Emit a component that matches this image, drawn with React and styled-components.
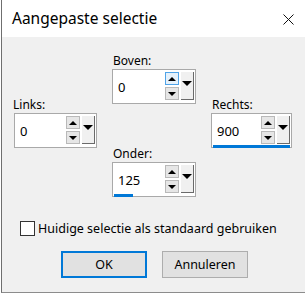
import React from "react";
import styled, { createGlobalStyle } from "styled-components";

const Global = createGlobalStyle`
  html, body { margin: 0; padding: 0; background: #ffffff; }
  body { font-family: "Noto Sans", "Open Sans", sans-serif; color: #000; }
  #root { width: 305px; height: 295px; overflow: hidden; }
`;

const Window = styled.div`
  margin-left: 1px;
  width: 304px;
  height: 293px;
  box-sizing: border-box;
  border-left: 1px solid #6f6f6f;
  border-bottom: 1px solid #8c8c8c;
  display: flex;
  flex-direction: column;
  background: #f0f0f0;
`;

const TitleBar = styled.div`
  height: 37px;
  flex: none;
  background: #ffffff;
  display: flex;
  align-items: center;
  justify-content: space-between;
  padding: 0 11px 0 10px;
`;

const Title = styled.div`
  font-size: 15.5px;
  margin-top: -1px;
`;

const CloseIcon = styled.svg`
  width: 11px;
  height: 11px;
  margin-top: 1px;
`;

const Body = styled.div`
  flex: 1;
  display: flex;
  flex-direction: column;
  padding: 16px 0 0 12px;
`;

const Fields = styled.div`
  display: flex;
  gap: 15px;
`;

const Column = styled.div`
  display: flex;
  flex-direction: column;
  gap: 42px;
  padding-top: ${(p) => p.$offset || 0}px;
`;

const Group = styled.div`
  display: flex;
  flex-direction: column;
`;

const Label = styled.div`
  font-size: 12px;
  line-height: 15px;
  height: 15px;
  margin: 0 0 1px ${(p) => p.$indent || 0}px;
`;

const Box = styled.div`
  width: ${(p) => p.$w}px;
  height: 35px;
  box-sizing: border-box;
  border: 1px solid #a9a9a9;
  background: #ffffff;
  display: flex;
  flex-direction: column;
  padding: 2px 1px 0 2px;
`;

const Row = styled.div`
  display: flex;
  height: 28px;
`;

const Value = styled.div`
  flex: 1;
  display: flex;
  align-items: center;
  padding-left: 3px;
  font-size: 13px;
  padding-top: 1px;
`;

const Spinners = styled.div`
  display: flex;
  flex-direction: column;
  gap: 2px;
  width: 14px;
  margin-right: 2px;
`;

const SpinBtn = styled.div`
  height: 13px;
  box-sizing: border-box;
  border: 1px solid ${(p) => (p.$hot ? "#4fa3e8" : "#b9b9b9")};
  background: ${(p) => (p.$hot ? "#e5f1fb" : "#e6e6e6")};
  display: flex;
  align-items: center;
  justify-content: center;
`;

const Tri = styled.span`
  width: 0;
  height: 0;
  border-left: ${(p) => p.$s}px solid transparent;
  border-right: ${(p) => p.$s}px solid transparent;
  ${(p) =>
    p.$up
      ? `border-bottom: ${p.$s}px solid #000;`
      : `border-top: ${p.$s}px solid #000;`}
`;

const DropBtn = styled.div`
  width: 13px;
  height: 28px;
  box-sizing: border-box;
  background: #f0f0f0;
  border-right: 1px solid #6a6a6a;
  border-bottom: 1px solid #6a6a6a;
  display: flex;
  justify-content: center;
  padding-top: 9px;
`;

const Track = styled.div`
  height: 3px;
  margin-top: 1px;
  margin-left: -1px;
`;

const Bar = styled.div`
  height: 3px;
  background: #0078d7;
  width: ${(p) => p.$fill * 100}%;
`;

const CheckRow = styled.label`
  display: flex;
  align-items: center;
  gap: 3px;
  margin: 23px 0 0 6px;
  font-size: 12.5px;
  height: 16px;
`;

const Check = styled.span`
  width: 15px;
  height: 15px;
  box-sizing: border-box;
  border: 1px solid #333;
  background: #fff;
`;

const Buttons = styled.div`
  display: flex;
  gap: 15px;
  margin: 15px 0 0 47px;
`;

const Button = styled.div`
  width: 86px;
  height: 27px;
  box-sizing: border-box;
  background: #e1e1e1;
  border: ${(p) => (p.$primary ? "2px solid #0078d7" : "1px solid #adadad")};
  display: flex;
  align-items: center;
  justify-content: center;
  font-size: 12.5px;
`;

function Spin({ label, value, w, fill = 0, hot = false, indent = 0 }) {
  return (
    <Group>
      <Label $indent={indent}>{label}</Label>
      <Box $w={w}>
        <Row>
          <Value>{value}</Value>
          <Spinners>
            <SpinBtn $hot={hot}>
              <Tri $up $s={4} />
            </SpinBtn>
            <SpinBtn>
              <Tri $s={4} />
            </SpinBtn>
          </Spinners>
          <DropBtn>
            <Tri $s={5} />
          </DropBtn>
        </Row>
        <Track>{fill > 0 && <Bar $fill={fill} />}</Track>
      </Box>
    </Group>
  );
}

export default function App() {
  return (
    <>
      <Global />
      <Window>
        <TitleBar>
          <Title>Aangepaste selectie</Title>
          <CloseIcon viewBox="0 0 11 11">
            <path d="M0.5 0.5 L10.5 10.5 M10.5 0.5 L0.5 10.5" stroke="#111" strokeWidth="1" fill="none" />
          </CloseIcon>
        </TitleBar>
        <Body>
          <Fields>
            <Column $offset={44}>
              <Spin label="Links:" value="0" w={83} indent={-1} />
            </Column>
            <Column>
              <Spin label="Boven:" value="0" w={84} hot indent={1} />
              <Spin label="Onder:" value="125" w={84} fill={0.24} indent={1} />
            </Column>
            <Column $offset={44}>
              <Spin label="Rechts:" value="900" w={81} fill={1} indent={1} />
            </Column>
          </Fields>
          <CheckRow>
            <Check />
            Huidige selectie als standaard gebruiken
          </CheckRow>
          <Buttons>
            <Button $primary>OK</Button>
            <Button>Annuleren</Button>
          </Buttons>
        </Body>
      </Window>
    </>
  );
}
